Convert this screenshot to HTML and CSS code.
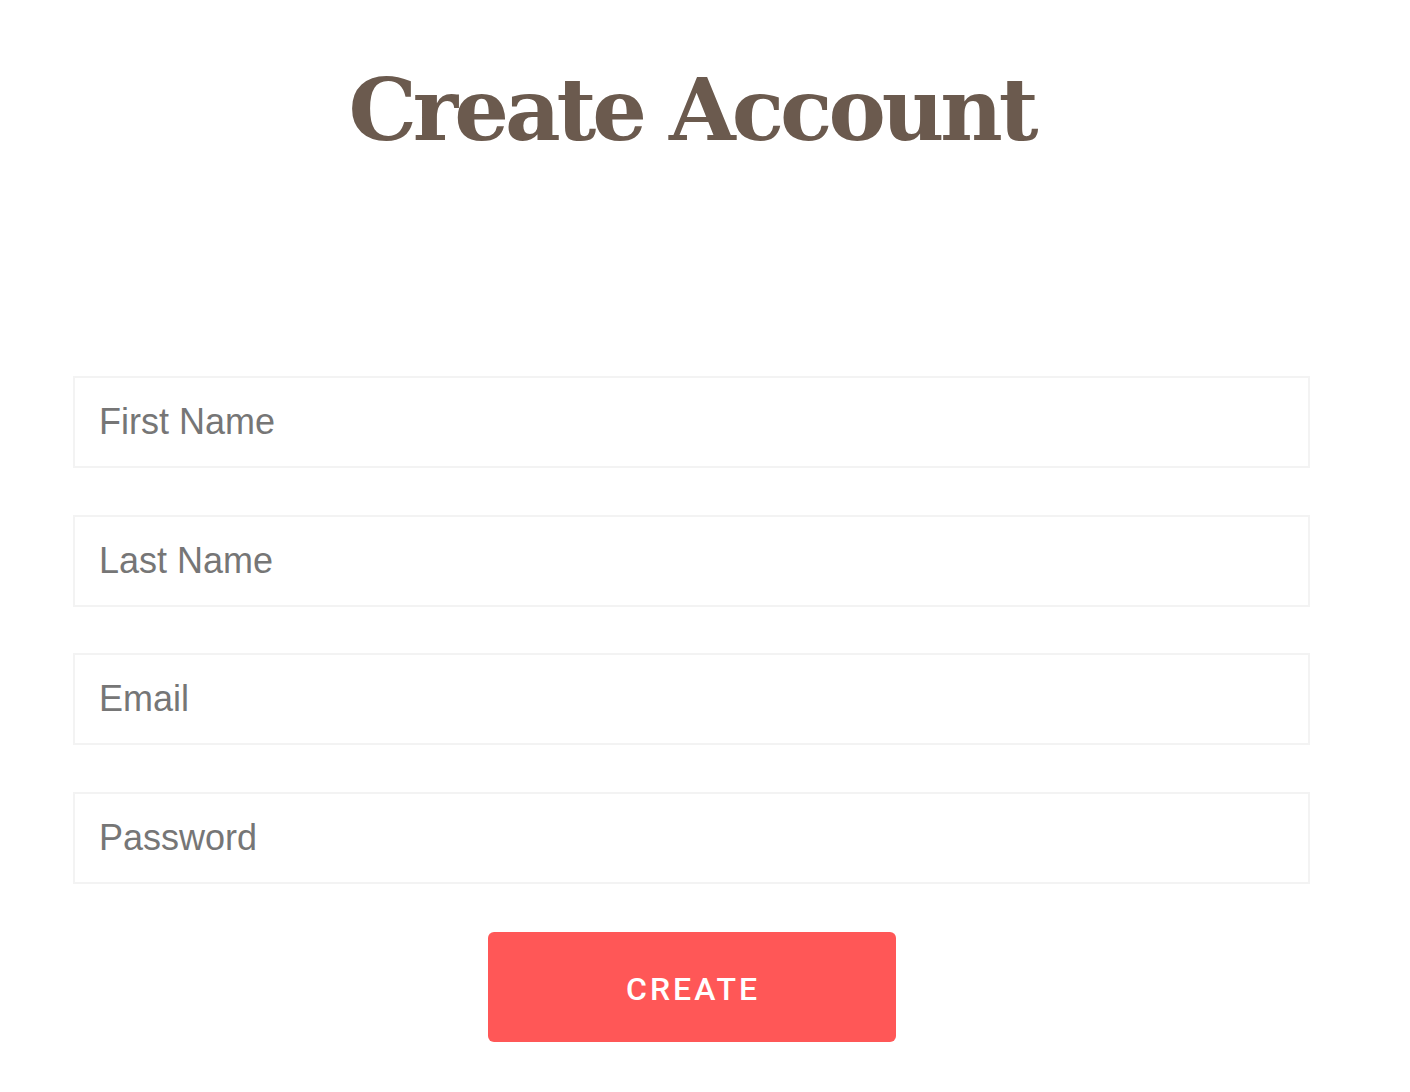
FILE: index.html
```html
<!DOCTYPE html>
<html lang="en">
<head>
<meta charset="utf-8">
<title>Create Account</title>
<link rel="stylesheet" href="styles.css">
</head>
<body>
<main class="page">
  <h1 class="title">Create Account</h1>
  <form class="form">
    <input class="field" type="text" placeholder="First Name">
    <input class="field" type="text" placeholder="Last Name">
    <input class="field" type="email" placeholder="Email">
    <input class="field" type="password" placeholder="Password">
    <div class="actions">
      <button class="btn" type="button">CREATE</button>
    </div>
  </form>
</main>
</body>
</html>
```
FILE: styles.css
```css
html, body {
  margin: 0;
  padding: 0;
  background: #ffffff;
}
.page {
  width: 1237px;
  margin-left: 73px;
  padding-top: 55px;
}
.title {
  margin: 0;
  text-align: center;
  font-family: "DejaVu Serif", serif;
  font-weight: bold;
  font-size: 86px;
  line-height: 110px;
  color: #6b5a4e;
  letter-spacing: -4px;
}
.form {
  display: flex;
  flex-direction: column;
  gap: 46.5px;
  margin-top: 211px;
}
.field {
  box-sizing: border-box;
  width: 100%;
  height: 92px;
  border: 2px solid #f3f3f3;
  background: #fff;
  padding: 0 24px;
  font-family: "Liberation Sans", Arial, sans-serif;
  font-size: 36px;
  color: #555;
  outline: none;
}
.field::placeholder {
  color: #767676;
  opacity: 1;
}
.actions {
  display: flex;
  justify-content: center;
  margin-top: 2px;
}
.btn {
  width: 408px;
  height: 110px;
  border: none;
  border-radius: 6px;
  background: #ff5757;
  color: #ffffff;
  font-family: Roboto, "Liberation Sans", sans-serif;
  font-weight: 500;
  font-size: 32px;
  letter-spacing: 3px;
  padding: 3px 0 0 3px;
}
```
